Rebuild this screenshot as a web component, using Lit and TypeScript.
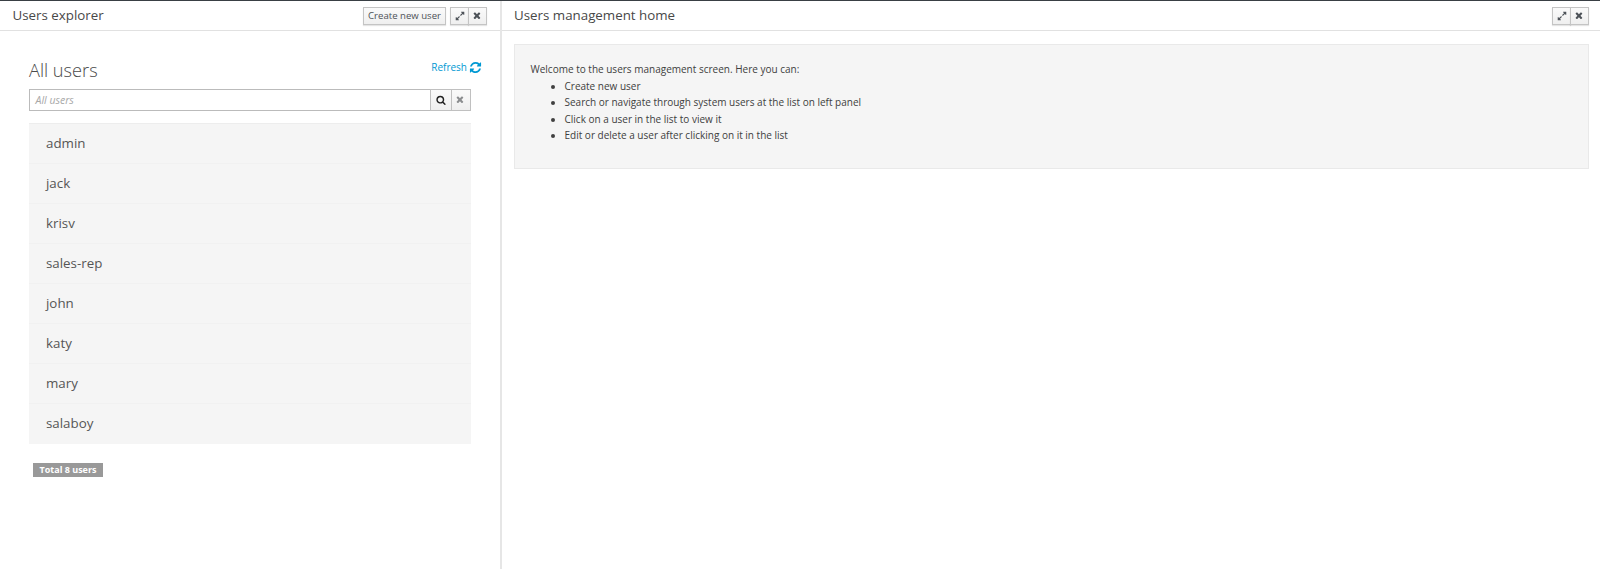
import { LitElement, html, css, svg } from "lit";
import { customElement } from "lit/decorators.js";

const ICONS = {
  times: "M1298 1214q0 40-28 68l-136 136q-28 28-68 28t-68-28l-294-294-294 294q-28 28-68 28t-68-28l-136-136q-28-28-28-68t28-68l294-294-294-294q-28-28-28-68t28-68l136-136q28-28 68-28t68 28l294 294 294-294q28-28 68-28t68 28l136 136q28 28 28 68t-28 68l-294 294 294 294q28 28 28 68z",
  search: "M1216 832q0-185-131.5-316.5t-316.5-131.5-316.5 131.5-131.5 316.5 131.5 316.5 316.5 131.5 316.5-131.5 131.5-316.5zm512 832q0 52-38 90t-90 38q-54 0-90-38l-343-342q-179 124-399 124-143 0-273.5-55.5t-225-150-150-225-55.5-273.5 55.5-273.5 150-225 225-150 273.5-55.5 273.5 55.5 225 150 150 225 55.5 273.5q0 220-124 399l343 343q37 37 37 90z",
  refresh: "M1639 1056q0 5-1 7-64 268-268 434.5t-478 166.5q-146 0-282.5-55t-243.5-157l-129 129q-19 19-45 19t-45-19-19-45v-448q0-26 19-45t45-19h448q26 0 45 19t19 45-19 45l-137 137q71 66 161 102t187 36q134 0 250-65t186-179q11-17 53-117 8-23 30-23h192q13 0 22.5 9.5t9.5 22.5zm25-800v448q0 26-19 45t-45 19h-448q-26 0-45-19t-19-45 19-45l138-138q-148-137-349-137-134 0-250 65t-186 179q-11 17-53 117-8 23-30 23h-199q-13 0-22.5-9.5t-9.5-22.5v-7q65-268 270-434.5t480-166.5q146 0 284 55.5t245 156.5l130-129q19-19 45-19t45 19 19 45z",
  expand: "M883 1056q0 13-10 23l-332 332 144 144q19 19 19 45t-19 45-45 19h-448q-26 0-45-19t-19-45v-448q0-26 19-45t45-19 45 19l144 144 332-332q10-10 23-10t23 10l114 114q10 10 10 23zm781-864v448q0 26-19 45t-45 19-45-19l-144-144-332 332q-10 10-23 10t-23-10l-114-114q-10-10-10-23t10-23l332-332-144-144q-19-19-19-45t19-45 45-19h448q26 0 45 19t19 45z",
};

const icon = (name: keyof typeof ICONS, cls = "") => html`<svg class="icon ${cls}" viewBox="0 0 1792 1792" aria-hidden="true">${svg`<path d=${ICONS[name]} fill="currentColor"></path>`}</svg>`;

const USERS = ["admin", "jack", "krisv", "sales-rep", "john", "katy", "mary", "salaboy"];
const TIPS = [
  "Create new user",
  "Search or navigate through system users at the list on left panel",
  "Click on a user in the list to view it",
  "Edit or delete a user after clicking on it in the list",
];

@customElement("app-root")
export class AppRoot extends LitElement {
  static styles = css`
    :host {
      display: flex;
      height: 569px;
      box-sizing: border-box;
      border-top: 1px solid #393f44;
      font-family: "Open Sans", "Noto Sans", sans-serif;
      color: #363636;
      background: #fff;
      overflow: hidden;
    }
    * { box-sizing: border-box; }
    .left { width: 502px; flex: none; border-right: 2px solid #e6e6e6; display: flex; flex-direction: column; }
    .right { flex: 1; min-width: 0; display: flex; flex-direction: column; }
    .head {
      height: 30px;
      flex: none;
      border-bottom: 1px solid #e1e1e1;
      display: flex;
      align-items: center;
      padding: 0 11px 0 12.5px;
      gap: 4px;
    }
    .left .head { padding-right: 13px; }
    .right .head { padding-left: 12px; }
    .title { flex: 1; font-size: 13.33px; color: #484848; padding-bottom: 1px; }
    .btn {
      height: 18px;
      display: inline-flex;
      align-items: center;
      justify-content: center;
      border: 1px solid #c4c4c4;
      background: linear-gradient(#fafafa, #efefef);
      font-family: inherit;
      font-size: 9.6px;
      color: #4d5258;
      padding: 0 4px;
      box-shadow: 0 1px 1px rgba(0,0,0,.1);
    }
    .group { display: flex; }
    .group .btn { width: 19px; padding: 0; }
    .group .btn + .btn { margin-left: -1px; width: 19px; }
    .icon { width: 10px; height: 10px; display: block; }
    .body { padding: 23px 29px 0 29px; flex: 1; }
    .top { display: flex; justify-content: space-between; height: 34px; margin-right: -11px; }
    h2 { margin: 0; font-size: 18.2px; font-weight: 300; line-height: 32px; color: #4a4a4a; }
    .refresh { display: flex; align-items: center; gap: 2px; height: 26px; font-size: 10px; color: #0099d3; }
    .refresh .icon { width: 13px; height: 13px; }
    .search { display: flex; height: 22px; margin-top: 1px; }
    .input {
      flex: 1;
      border: 1px solid #bbb;
      border-right: none;
      padding-left: 5.5px;
      display: flex;
      align-items: center;
      font-size: 10.5px;
      font-style: italic;
      color: #a8a8a8;
    }
    .search .btn { height: 22px; width: 22px; padding: 0; box-shadow: none; color: #222; border-color: #c0c0c0; }
    .search .btn.clear { width: 20px; margin-left: -1px; color: #8b8d8f; }
    .list { margin-top: 12px; border-top: 1px solid #ededed; background: #f5f5f5; }
    .item {
      height: 40px;
      display: flex;
      align-items: center;
      padding: 0 0 2px 17px;
      font-size: 13.33px;
      color: #555;
      border-bottom: 1px solid #f1f1f1;
    }
    .item:last-child { border-bottom: none; }
    .badge {
      display: inline-block;
      margin: 19px 0 0 4px;
      height: 14px;
      line-height: 14px;
      width: 70px;
      text-align: center;
      background: #999;
      color: #fff;
      font-size: 9px;
      font-weight: 700;
    }
    .main { padding: 13px 11px 0 12px; }
    .well {
      height: 125px;
      background: #f5f5f5;
      border: 1px solid #e9e9e9;
      padding: 16px 15.5px;
      font-size: 10px;
      line-height: 16.5px;
      color: #404040;
    }
    ul { margin: 0; padding: 0 0 0 34px; }
  `;

  render() {
    return html`
      <section class="left">
        <header class="head">
          <div class="title">Users explorer</div>
          <button class="btn">Create new user</button>
          <div class="group">
            <button class="btn">${icon("expand")}</button>
            <button class="btn">${icon("times")}</button>
          </div>
        </header>
        <div class="body">
          <div class="top">
            <h2>All users</h2>
            <div class="refresh">Refresh ${icon("refresh")}</div>
          </div>
          <div class="search">
            <div class="input">All users</div>
            <button class="btn">${icon("search")}</button>
            <button class="btn clear">${icon("times")}</button>
          </div>
          <div class="list">
            ${USERS.map((u) => html`<div class="item">${u}</div>`)}
          </div>
          <span class="badge">Total 8 users</span>
        </div>
      </section>
      <section class="right">
        <header class="head">
          <div class="title">Users management home</div>
          <div class="group">
            <button class="btn">${icon("expand")}</button>
            <button class="btn">${icon("times")}</button>
          </div>
        </header>
        <div class="main">
          <div class="well">
            Welcome to the users management screen. Here you can:
            <ul>${TIPS.map((t) => html`<li>${t}</li>`)}</ul>
          </div>
        </div>
      </section>
    `;
  }
}
